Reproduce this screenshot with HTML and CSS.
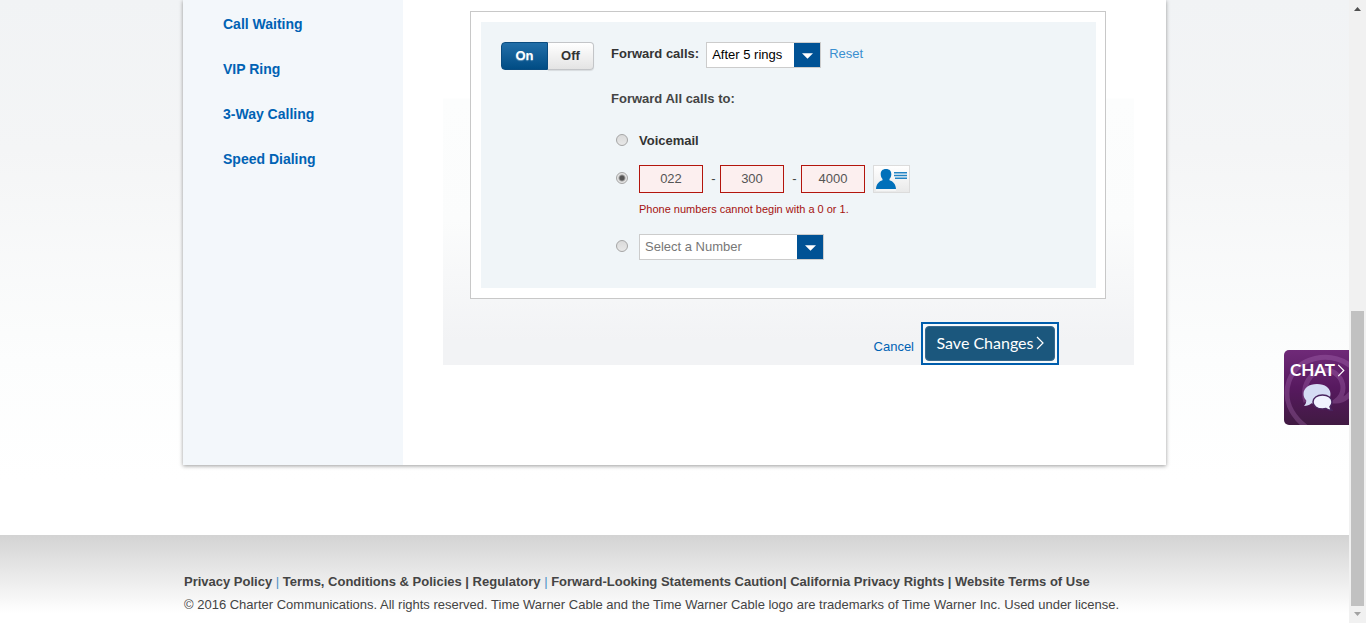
FILE: index.html
```
<!DOCTYPE html>
<html lang="en">
<head>
<meta charset="utf-8">
<title>Call Forwarding</title>
<link rel="stylesheet" href="styles.css">
</head>
<body>
<div class="page">
  <div class="card">
    <nav class="side-nav">
      <a href="#">Call Waiting</a>
      <a href="#">VIP Ring</a>
      <a href="#">3-Way Calling</a>
      <a href="#">Speed Dialing</a>
    </nav>
    <main class="content">
      <form class="panel">
        <div class="frame">
          <div class="settings">
            <div class="toggle">
              <button type="button" class="toggle-on">On</button>
              <button type="button" class="toggle-off">Off</button>
            </div>
            <div class="fields">
              <div class="rings">
                <label class="strong" for="rings">Forward calls:</label>
                <span class="select select-rings">
                  <select id="rings"><option>After 5 rings</option></select>
                  <svg class="caret" viewBox="0 0 12 6" aria-hidden="true"><path d="M0 0h12L6 6z"/></svg>
                </span>
                <a class="reset" href="#">Reset</a>
              </div>
              <p class="strong caption">Forward All calls to:</p>
              <div class="option option-voicemail">
                <input type="radio" name="target" id="voicemail">
                <label class="strong" for="voicemail">Voicemail</label>
              </div>
              <div class="option">
                <input type="radio" name="target" id="phone" aria-label="Phone number" checked>
                <div class="phone">
                  <input type="text" aria-label="Area code" value="022">
                  <span>-</span>
                  <input type="text" aria-label="Prefix" value="300">
                  <span>-</span>
                  <input type="text" aria-label="Line number" value="4000">
                </div>
                <button type="button" class="contacts" aria-label="Address book">
                  <svg viewBox="0 0 35 26" aria-hidden="true">
                    <path fill="#0070ba" d="M12 3c3.600 0 5.500 2.200 5.300 5.300-.1 2-.7 3.500-1.800 4.700v1.200c3.500 1 6.200 3.800 6.500 8.800H2c.3-5 3-7.800 6.500-8.800V13c-1.100-1.200-1.700-2.700-1.800-4.700C6.500 5.200 8.400 3 12 3z"/>
                    <path stroke="#2384c4" stroke-width="1.500" d="M20 6.700h13M20 9.500h13M21 12.300h12"/>
                    <path stroke="#fff" d="M2 24h20"/>
                  </svg>
                </button>
              </div>
              <p class="error">Phone numbers cannot begin with a 0 or 1.</p>
              <div class="option">
                <input type="radio" name="target" id="saved" aria-label="Saved number">
                <span class="select select-number">
                  <select aria-label="Select a Number"><option>Select a Number</option></select>
                  <svg class="caret" viewBox="0 0 12 6" aria-hidden="true"><path d="M0 0h12L6 6z"/></svg>
                </span>
              </div>
            </div>
          </div>
        </div>
        <div class="actions">
          <a href="#">Cancel</a>
          <div class="focus-ring">
            <button type="button" class="save">Save Changes<svg viewBox="0 0 8 14" aria-hidden="true"><path d="M1 1l6 6-6 6"/></svg></button>
          </div>
        </div>
      </form>
    </main>
  </div>
  <footer class="footer">
    <div class="footer-inner">
      <p class="links"><a href="#">Privacy Policy</a> <i>|</i> <a href="#">Terms, Conditions &amp; Policies</a> | <a href="#">Regulatory</a> <i>|</i> <a href="#">Forward-Looking Statements Caution</a>| <a href="#">California Privacy Rights</a> | <a href="#">Website Terms of Use</a></p>
      <p>© 2016 Charter Communications. All rights reserved. Time Warner Cable and the Time Warner Cable logo are trademarks of Time Warner Inc. Used under license.</p>
    </div>
  </footer>
</div>
<div class="scrollbar" aria-hidden="true">
  <svg viewBox="0 0 7 4"><path fill="#505050" d="M0 4h7L3.500 0z"/></svg>
  <div class="thumb"></div>
  <svg viewBox="0 0 7 4"><path fill="#a3a3a3" d="M0 0h7L3.500 4z"/></svg>
</div>
<button type="button" class="chat">
  <svg class="swirl" viewBox="0 0 65 75" aria-hidden="true">
    <path d="M67 16C45 0 14 7 5 31c-6 18 2 34 17 46M22 52c-5-17 5-31 18-32 12 0 19 9 19 18 0 6-3 10-7 13 5 0 10-2 15-8"/>
  </svg>
  <span class="chat-label">CHAT<svg viewBox="0 0 8 14" aria-hidden="true"><path d="M1 1l6 6-6 6"/></svg></span>
  <svg class="bubbles" viewBox="0 0 30 28" aria-hidden="true">
    <path fill="#d5dcf4" d="M14 1c8 0 13.500 4 13.500 10S22 21 14 21c-2 0-4-.3-5.500-.8C6.500 22 4 23 1 23c1.500-1.500 2.300-3.500 2.300-5.500C1.500 15.500.5 13.500.5 11 .5 5 6 1 14 1z"/>
    <path fill="#f0f2ff" stroke="#49245f" stroke-width="1.500" d="M19.500 12c5.500 0 9.500 3 9.500 7 0 2-.8 3.500-2 4.700.2 1.300.8 2.300 2 3.600-2.500 0-4.500-.6-6-1.800-1 .3-2.200.5-3.500.5-5.500 0-9.500-3-9.500-7s4-7 9.500-7z"/>
  </svg>
</button>
</body>
</html>
```
FILE: styles.css
```
* {
  box-sizing: border-box;
}

body {
  margin: 0;
  min-height: 100vh;
  display: flex;
  font: 13px/20px "Liberation Sans", Arial, sans-serif;
  color: #444;
}

p {
  margin: 0;
}

a {
  color: #0062b4;
  text-decoration: none;
}

button,
input,
select {
  font: inherit;
  margin: 0;
}

.page {
  flex: 1;
  display: flex;
  flex-direction: column;
  background: linear-gradient(#f1f3f5, #f4f5f6 150px, #fcfdfd 360px, #fff 480px);
}

.card {
  width: 983px;
  max-width: 100%;
  min-height: 465px;
  margin: 0 auto 70px;
  display: flex;
  background: #fff;
  box-shadow: 0 1px 4px rgba(0, 0, 0, 0.4);
}

.side-nav {
  width: 220px;
  padding: 14px 40px;
  display: flex;
  flex-direction: column;
  gap: 25px;
  background: #f3f7fb;
  font-size: 14px;
  font-weight: bold;
}

.content {
  flex: 1;
  padding: 0 32px 100px 40px;
}

.panel {
  padding: 11px 28px 0 27px;
  background: linear-gradient(#fff 98px, #fcfdfd 99px, #fbfcfc 220px, #f2f3f5 340px);
}

.frame {
  padding: 10px 9px 10px 10px;
  border: 1px solid #c8c8c8;
  background: #fff;
}

.settings {
  padding: 20px 20px 28px;
  display: flex;
  align-items: flex-start;
  gap: 17px;
  background: #f0f5f8;
}

.toggle {
  display: flex;
}

.toggle button {
  height: 28px;
  padding: 0;
  font-weight: bold;
}

.toggle-on {
  width: 47px;
  border: 1px solid #0a4c80;
  border-radius: 4px 0 0 4px;
  background: linear-gradient(#226fa9, #004c84);
  color: #fff;
  text-shadow: 0 1px 1px rgba(255, 255, 255, 0.4);
}

.toggle-off {
  width: 46px;
  border: 1px solid #c3c5c8;
  border-left: 0;
  border-radius: 0 4px 4px 0;
  background: linear-gradient(#fff, #e4e4e4);
  color: #333;
  box-shadow: 0 1px 1px rgba(0, 0, 0, 0.1);
}

.strong {
  font-weight: bold;
  color: #333;
}

.rings {
  display: flex;
  align-items: flex-start;
}

.rings label,
.rings a {
  margin-top: 2px;
}

.select {
  position: relative;
  display: flex;
  height: 26px;
}

.select select {
  width: 100%;
  padding: 0 30px 0 5px;
  border: 1px solid #ccc;
  border-radius: 0;
  appearance: none;
  background: linear-gradient(#005295, #005295) right / 26px 100% no-repeat #fff;
  color: #000;
}

.select-rings {
  width: 115px;
  margin: 0 8px 0 7px;
}

.select-number {
  width: 185px;
}

.select-number select {
  color: #777;
}

.caret {
  position: absolute;
  right: 8px;
  top: 11px;
  width: 11px;
  height: 6px;
  fill: #fff;
}

.rings .reset {
  color: #3a8fd0;
}

.caption {
  margin: 21px 0 22px;
  color: #444;
}

.option {
  display: flex;
  align-items: center;
  padding-left: 5px;
}

.option-voicemail {
  margin-bottom: 14px;
}

input[type="radio"] {
  appearance: none;
  width: 12px;
  height: 12px;
  margin: 0 11px 2px 0;
  border: 1px solid #a5a5a5;
  border-radius: 50%;
  background: linear-gradient(#dadada, #e8e8e8);
}

input[type="radio"]:checked {
  background: radial-gradient(#555 2px, #e4e4e4 4px);
}

.phone {
  display: flex;
  align-items: center;
}

.phone input {
  width: 64px;
  height: 28px;
  padding: 0 0 2px;
  border: 1px solid #b3150d;
  background: #fcefef;
  color: #555;
  text-align: center;
}

.phone span {
  width: 17px;
  padding-left: 4px;
  text-align: center;
}

.contacts {
  width: 37px;
  height: 28px;
  margin-left: 8px;
  padding: 0;
  border: 1px solid #dcdcdc;
  background: linear-gradient(#fff, #e9e9e9);
  display: flex;
  justify-content: center;
}

.contacts svg {
  width: 35px;
  height: 26px;
}

.error {
  margin: 6px 0 15px 28px;
  font-size: 11px;
  color: #a5120f;
}

.actions {
  display: flex;
  justify-content: flex-end;
  gap: 7px;
  padding: 23px 47px 0 0;
}

.actions a {
  margin-top: 15px;
}

.focus-ring {
  padding: 2px;
  border: 2px solid #005dac;
  background: #f7fafb;
}

.save {
  width: 130px;
  height: 35px;
  padding: 0 0 1px;
  border: 1px solid #37688d;
  border-radius: 4px;
  background: #1b577d;
  color: #fff;
  font: 16px/20px Lato, sans-serif;
  display: flex;
  align-items: center;
  justify-content: center;
  gap: 2px;
}

.save svg {
  width: 8px;
  height: 14px;
  fill: none;
  stroke: #fff;
  stroke-width: 1.2;
}

.footer {
  flex: 1;
  background: linear-gradient(#d3d3d3, #fff 78px);
}

.footer-inner {
  width: 981px;
  max-width: 100%;
  margin: 0 auto;
  padding-top: 37px;
}

.footer p + p {
  margin-top: 3px;
}

.links {
  font-weight: bold;
}

.links a {
  color: #444;
}

.links i {
  font-style: normal;
  font-weight: normal;
  color: #4c91c6;
}

.scrollbar {
  width: 17px;
  padding: 7px 0;
  display: flex;
  flex-direction: column;
  align-items: center;
  gap: 6px;
  background: #f1f1f1;
}

.scrollbar svg {
  width: 7px;
  height: 4px;
}

.thumb {
  flex: 1;
  width: 13px;
  margin-top: 294px;
  background: #c1c1c1;
}

.chat {
  position: fixed;
  right: 17px;
  top: 350px;
  width: 65px;
  height: 75px;
  padding: 10px 4px 0 6px;
  border: 0;
  border-radius: 5px 0 0 5px;
  overflow: hidden;
  background: linear-gradient(#6f2a78, #57195f 50%, #401a42);
  color: #fff;
  font: bold 17px/20px Lato, sans-serif;
  display: flex;
  flex-direction: column;
  align-items: center;
  gap: 3px;
}

.chat-label {
  position: relative;
  display: flex;
  align-items: center;
  gap: 2px;
}

.chat-label svg {
  width: 8px;
  height: 13px;
  fill: none;
  stroke: #fff;
  stroke-width: 1.3;
}

.swirl {
  position: absolute;
  left: 0;
  top: 0;
  width: 65px;
  height: 75px;
  fill: none;
  stroke: rgba(190, 130, 200, 0.28);
  stroke-width: 5;
}

.bubbles {
  position: relative;
  width: 30px;
  height: 28px;
}
```
